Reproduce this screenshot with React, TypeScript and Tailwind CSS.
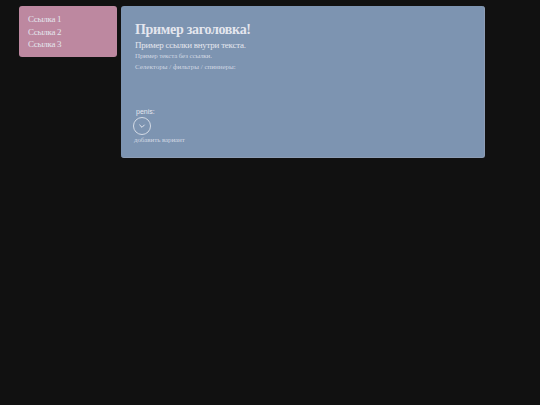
const links = ["Ссылка 1", "Ссылка 2", "Ссылка 3"];

export default function App() {
  return (
    <div className="min-h-[405px] bg-[#111111] font-['Liberation_Serif',serif] text-[#e4e6ee]">
      <div className="flex items-start gap-[3.5px] pl-[19px] pt-[6px]">
        <nav className="flex h-[51px] w-[98px] flex-col rounded-[3px] bg-[#bd88a0] pl-[9px] pt-[7px] text-[9px] leading-[12.5px] tracking-[-0.3px]">
          {links.map((link) => (
            <a key={link} href="#">
              {link}
            </a>
          ))}
        </nav>
        <main className="flex h-[152px] w-[364.5px] flex-col rounded-[3px] border-r border-b border-[#8d9db5] bg-[#7d94b1] pl-[12.5px] pt-[15px]">
          <h1 className="pl-[2px] text-[14px] leading-[17px] font-bold tracking-[-0.3px]">Пример заголовка!</h1>
          <p className="pl-[2px] pt-[1px] text-[9px] leading-[12px] tracking-[-0.25px]">Пример ссылки внутри текста.</p>
          <p className="pl-[2px] pt-[1px] text-[7px] leading-[9px] tracking-[-0.13px] text-[#d0d7e3]">Пример текста без ссылки.</p>
          <p className="pl-[2px] pt-[1.5px] text-[7px] leading-[9px] text-[#d0d7e3]">Селекторы / фильтры / спиннеры:</p>
          <span className="pl-[3px] pt-[35px] font-['Liberation_Sans',sans-serif] text-[7px] leading-[9px]">penis:</span>
          <button type="button" className="mt-[1px] flex h-[18px] w-[18px] items-center justify-center rounded-full border border-[#d4dbe6]">
            <svg className="h-2 w-2" viewBox="0 0 24 24" fill="none" stroke="currentColor" strokeWidth="3" aria-hidden="true">
              <path strokeLinecap="round" strokeLinejoin="round" d="m5 9 7 7 7-7" />
            </svg>
          </button>
          <span className="pl-[1px] pt-[1px] text-[7px] leading-[9px] tracking-[-0.1px] text-[#d0d7e3]">добавить вариант</span>
        </main>
      </div>
    </div>
  );
}
